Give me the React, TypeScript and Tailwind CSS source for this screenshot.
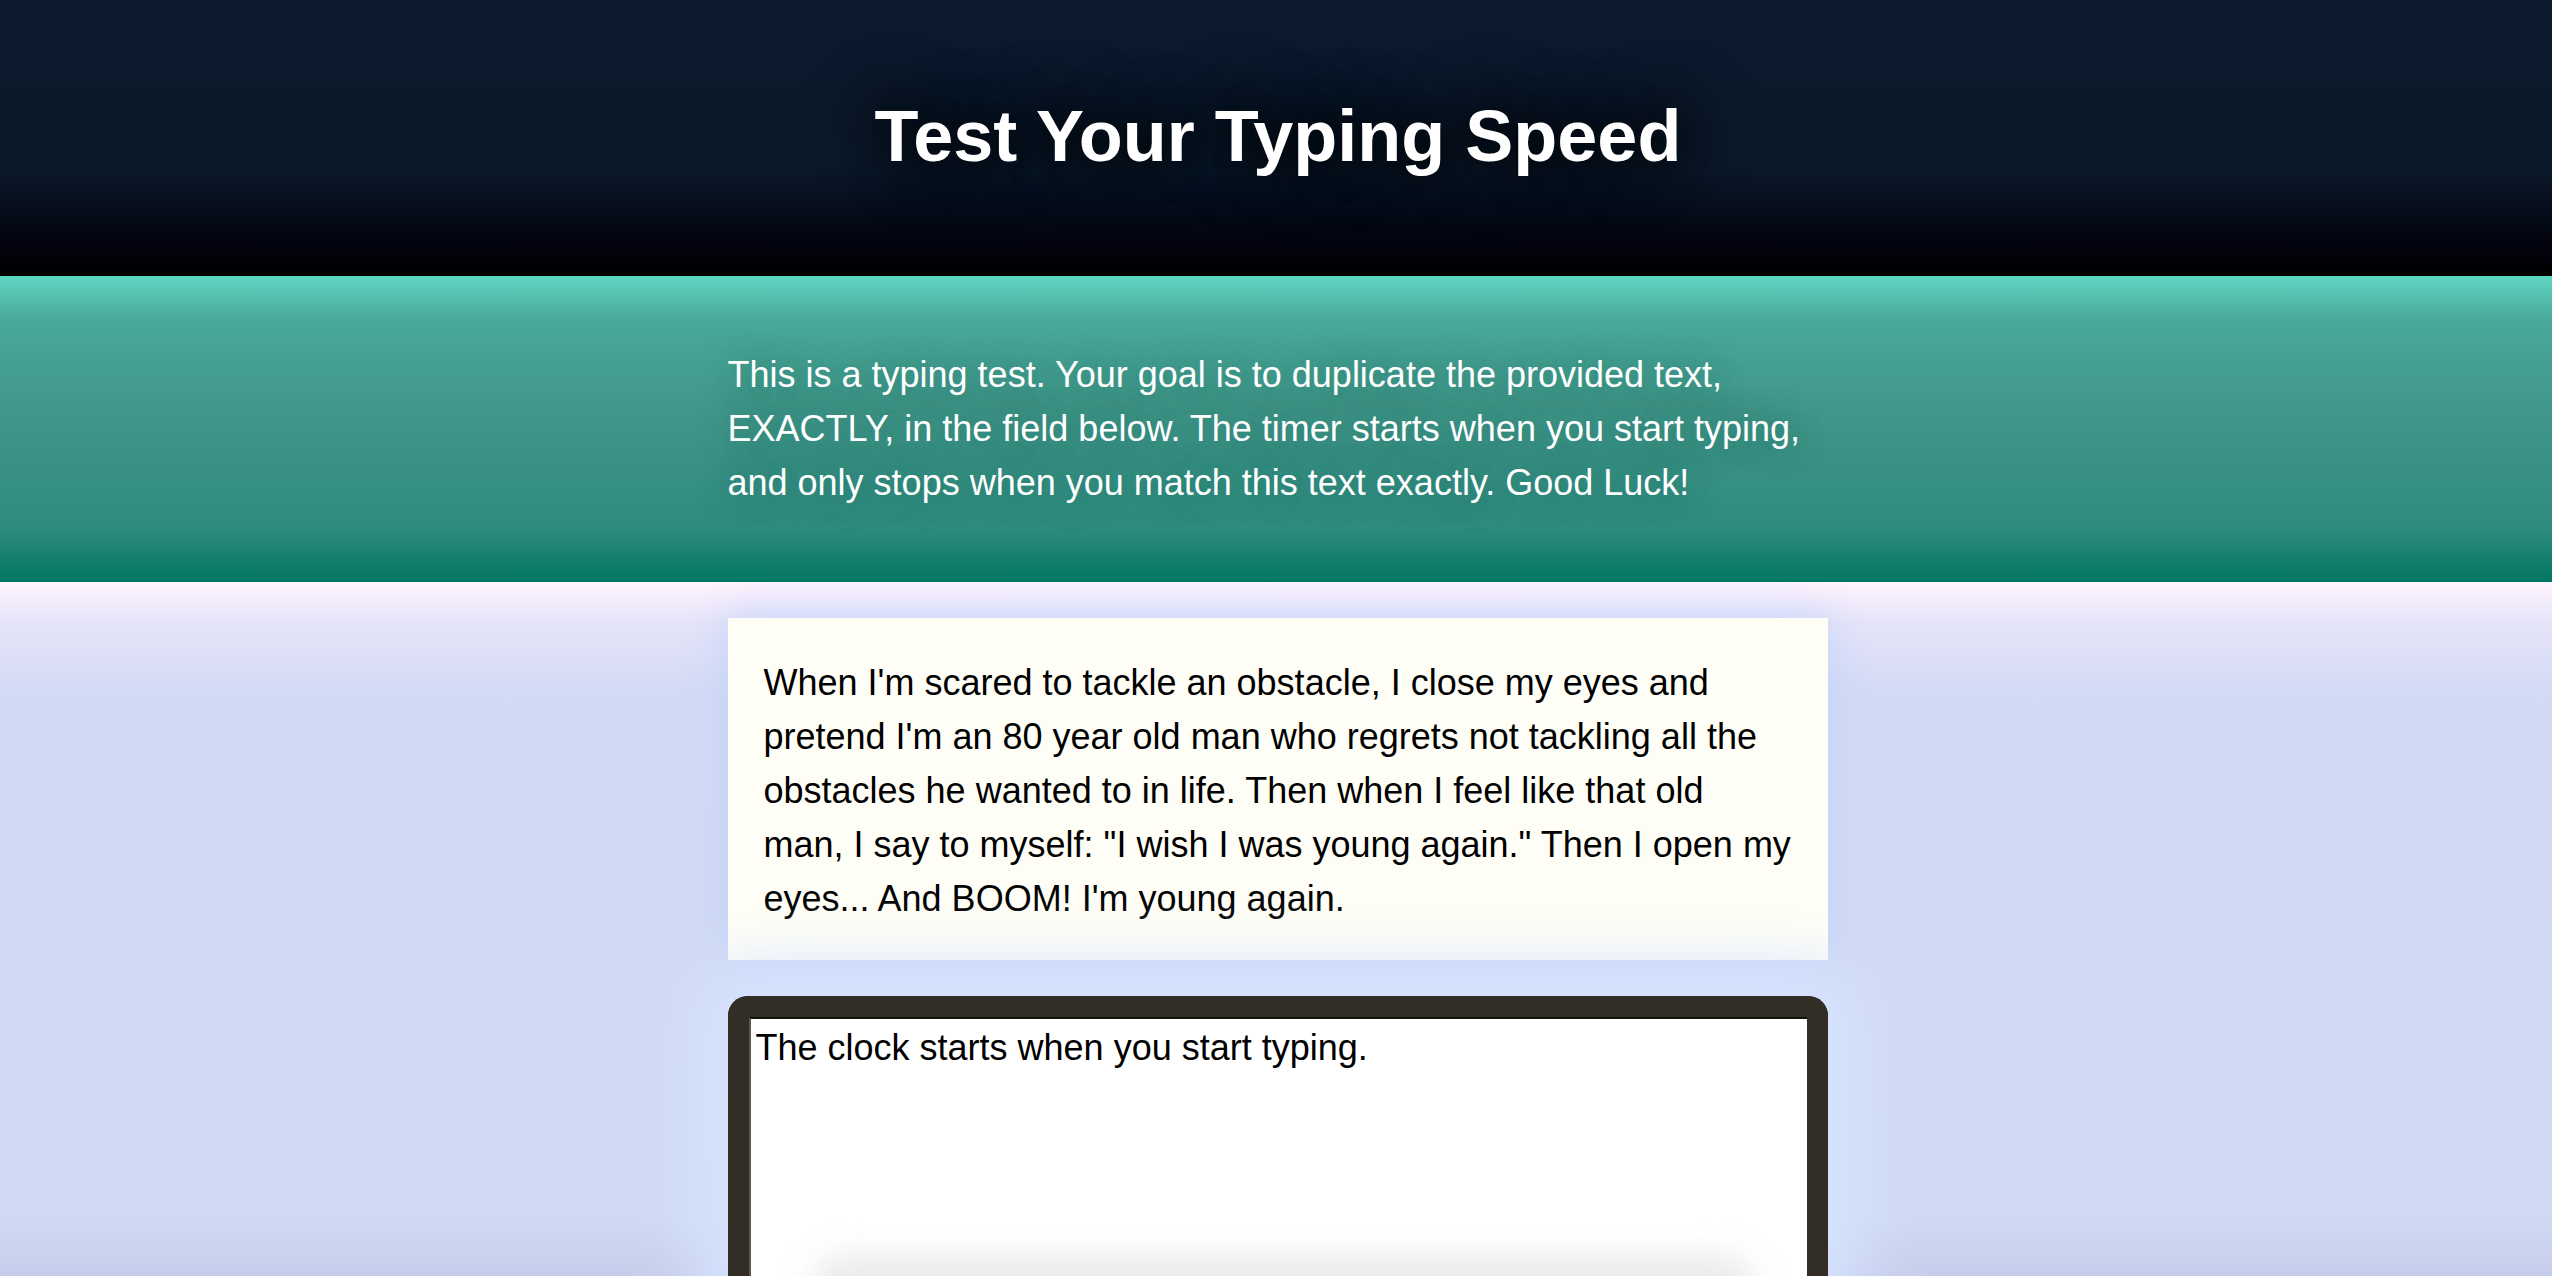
import { useState } from 'react'

const font = "font-['Liberation_Sans',Helvetica,Arial,sans-serif]"

export default function App() {
  const [typed, setTyped] = useState('')

  return (
    <div className={`flex h-[1276px] flex-col overflow-hidden pl-[3px] ${font}`}>
      <header className="-ml-[3px] flex h-[276px] shrink-0 items-center justify-center bg-[linear-gradient(to_bottom,#0c1a2e_0%,#0b1829_62%,#03040f_88%,#000000_100%)] pb-[4px] pl-[4px]">
        <h1 className="text-[72px] leading-none font-bold text-white [text-shadow:0_0_40px_#000,0_0_70px_#000]">
          Test Your Typing Speed
        </h1>
      </header>

      <section className="-ml-[3px] h-[306px] shrink-0 bg-[linear-gradient(to_bottom,#5fd6c2_0%,#4aa99a_14%,#409689_45%,#2f8b7e_82%,#0a7a66_97%,#007863_100%)] pl-[3px]">
        <p className="mx-auto w-[1100px] whitespace-nowrap pt-[72px] text-[36px] leading-[54px] text-white [text-shadow:0_0_30px_rgba(0,95,80,0.6)]">
          This is a typing test. Your goal is to duplicate the provided text,
          <br />
          EXACTLY, in the field below. The timer starts when you start typing,
          <br />
          and only stops when you match this text exactly. Good Luck!
        </p>
      </section>

      <main className="-ml-[3px] flex flex-1 flex-col items-center overflow-hidden bg-[linear-gradient(to_bottom,#fff3fd_0px,#e6e4f9_40px,#d3daf4_110px,#cfd9f2_92%,#c6cdeb_100%)] pt-9 pl-[3px]">
        <div className="w-[1100px] shrink-0 bg-[#fffef6] pt-[38px] pr-5 pb-[34px] pl-9 shadow-[0_0_40px_#c3d3fa]">
          <p className="whitespace-nowrap text-[36px] leading-[54px] text-black">
            When I'm scared to tackle an obstacle, I close my eyes and
            <br />
            pretend I'm an 80 year old man who regrets not tackling all the
            <br />
            obstacles he wanted to in life. Then when I feel like that old
            <br />
            man, I say to myself: "I wish I was young again." Then I open my
            <br />
            eyes... And BOOM! I'm young again.
          </p>
        </div>

        <div className="relative mt-9 h-[420px] w-[1100px] shrink-0 rounded-t-[20px] border-[21px] border-b-0 border-[#322e25] shadow-[0_0_70px_30px_#d7e4ff]">
          <textarea
            value={typed}
            onChange={(e) => setTyped(e.target.value)}
            placeholder="The clock starts when you start typing."
            className="block h-full w-full resize-none border-t-[2px] border-l-[2px] border-t-[#15130f] border-l-[#5b5948] bg-white pt-[8px] pl-[5px] text-[36px] leading-[1.15] text-black outline-none placeholder:text-black"
          />
          <div className="pointer-events-none absolute top-[236px] right-[50px] left-[60px] h-[80px] rounded-[40px] bg-[#ececec] blur-[14px]" />
        </div>
      </main>
    </div>
  )
}
